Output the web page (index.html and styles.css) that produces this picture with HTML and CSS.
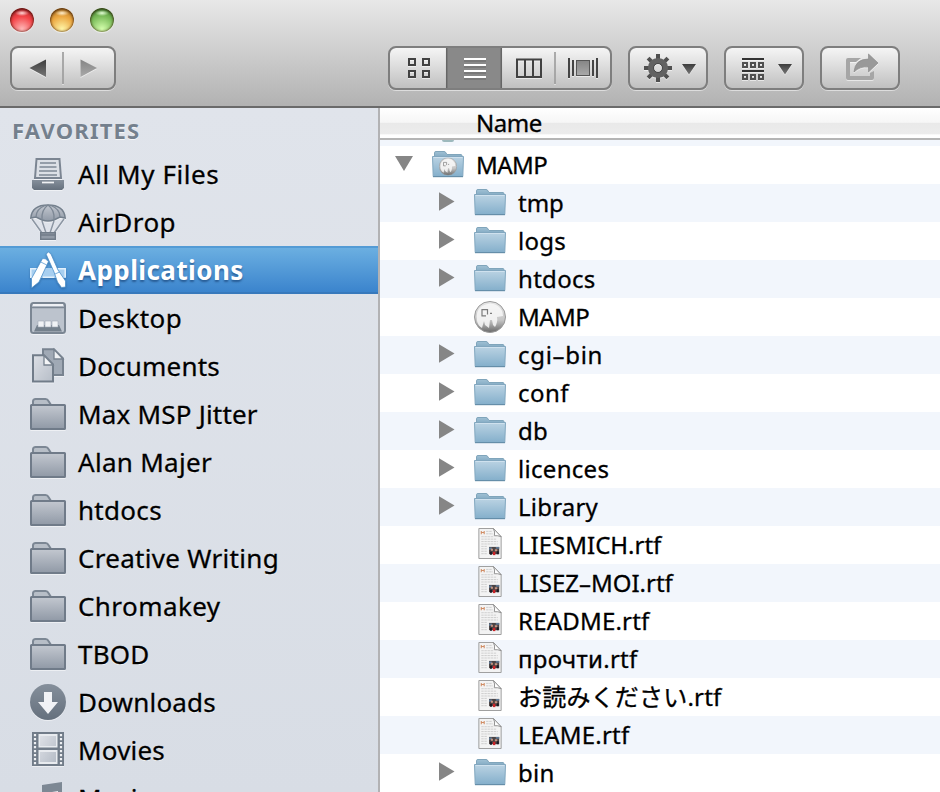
FILE: index.html
```
<!DOCTYPE html>
<html lang="en">
<head>
<meta charset="utf-8">
<title>Applications</title>
<link rel="stylesheet" href="styles.css">
</head>
<body>
<svg class="defs" width="0" height="0" aria-hidden="true">
  <defs>
    <linearGradient id="slate" x1="0" y1="0" x2="0" y2="1"><stop offset="0" stop-color="#858f9b"/><stop offset="1" stop-color="#65707d"/></linearGradient>
    <linearGradient id="pale" x1="0" y1="0" x2="0" y2="1"><stop offset="0" stop-color="#c3c8d0"/><stop offset="1" stop-color="#9099a6"/></linearGradient>
    <linearGradient id="paper" x1="0" y1="0" x2="1" y2="1"><stop offset="0" stop-color="#dde0e6"/><stop offset="1" stop-color="#b6bdc7"/></linearGradient>
    <linearGradient id="blue" x1="0" y1="0" x2="0" y2="1"><stop offset="0" stop-color="#bbd3e3"/><stop offset="1" stop-color="#84afcb"/></linearGradient>
    <linearGradient id="blueTab" x1="0" y1="0" x2="0" y2="1"><stop offset="0" stop-color="#a0c0d4"/><stop offset="1" stop-color="#7fa8c1"/></linearGradient>
    <linearGradient id="ink" x1="0" y1="0" x2="0" y2="1"><stop offset="0" stop-color="#3c3c3c"/><stop offset="1" stop-color="#777"/></linearGradient>
    <linearGradient id="faint" x1="0" y1="0" x2="0" y2="1"><stop offset="0" stop-color="#858585"/><stop offset="1" stop-color="#a9a9a9"/></linearGradient>
    <linearGradient id="ball" x1="0" y1="0" x2="0" y2="1"><stop offset="0" stop-color="#e6e6e6"/><stop offset=".6" stop-color="#c6c6c6"/><stop offset="1" stop-color="#6a6a6a"/></linearGradient>
    <symbol id="folder" viewBox="0 0 36 36">
      <path d="M3 13V9.500L5 7H15.500Q17.500 7 18.500 9L21 13" fill="#b3bac4" stroke="#788390" stroke-width="2"/>
      <rect x="1" y="13" width="34" height="24.500" rx=".5" fill="url(#pale)" stroke="#707b89" stroke-width="2"/>
    </symbol>
    <symbol id="sidefolder" viewBox="0 0 36 36">
      <path d="M3 9V5Q3.500 3 5.500 3H15.500Q17.500 3 18.500 5L21 9" fill="#b7bec7" stroke="#7c8794" stroke-width="2"/>
      <rect x="1" y="9" width="34" height="24" rx=".5" fill="url(#pale)" stroke="#707b89" stroke-width="2"/>
    </symbol>
    <symbol id="bluefolder" viewBox="0 0 32 38">
      <path d="M2.500 12V6.800Q2.500 5.500 4 5.500H12Q13.500 5.500 14 7L15 8.500H29Q30 8.500 30 10V12Z" fill="url(#blueTab)" stroke="#80a5bb" stroke-width="1"/>
      <path d="M.5 10.500H31.500L30.800 30.500H1.200Z" fill="url(#blue)" stroke="#82a7bf" stroke-width="1"/>
      <path d="M1.500 11.500H30.500" stroke="#cfe1ee"/><path d="M1 30.700H31" stroke="#5f89a4"/>
    </symbol>
    <symbol id="elephant" viewBox="0 0 32 32">
      <circle cx="16" cy="16" r="15.500" fill="url(#ball)" stroke="#999"/>
      <path d="M3 20Q1 10 8 5Q17 0 24 5Q29 9 29 15L23 16Q24 21 21 26L19 24L18 19L16 19L15 27L11 24L10 20L8 27Q4 25 3 20Z" fill="#f8f8f8" opacity=".85"/>
      <path d="M13.500 13.500V8.700H8V14.800H12M16 12.300H18" fill="none" stroke="#7b7b7b" stroke-width="1.200"/>
    </symbol>
    <symbol id="rtf" viewBox="0 0 24 32">
      <path d="M.5 .5H15.500L23.500 9V31.500H.5Z" fill="#f3f3f3" stroke="#9c9c9c"/>
      <path d="M3 3V6.500M6 3V6.500M3 4.700H6" stroke="#d08d65" stroke-width="1.100"/>
      <path d="M8 3.500H14M8 6H15M3 9H16M3 11.500H19M3 14H20M3 16.500H20M3 19H9M3 21.500H9M3 24H9M3 26.500H9" stroke="#cdcdcd" stroke-dasharray="2.500 .7"/>
      <rect x="11" y="19.500" width="10.500" height="7.500" fill="#4b4343"/>
      <path d="M11 20h3v2.500h-3zM18 19.500h3.500v2H18z" fill="#5f7893"/><path d="M13 21.500h2v2h-2zM17 22h2.500v2H17z" fill="#c79582"/><path d="M15 24.500h2.500V28H15z" fill="#cb2327"/><path d="M12 24.500h2v3h-2zM19 24h2v3h-2z" fill="#191b25"/>
      <path d="M15.500 .5Q17.500 4 16.500 8Q20 7.500 23.500 9Z" fill="#fff" stroke="#8f8f8f"/>
    </symbol>
    <symbol id="closed" viewBox="0 0 16 38"><path d="M0 8.300L15.500 17.500L0 26.700Z" fill="#868686"/></symbol>
  </defs>
</svg>

<div class="window">
  <header class="toolbar">
    <div class="lights"><span class="light red"></span><span class="light amber"></span><span class="light green"></span></div>
    <div class="controls">
      <div class="button nav">
        <svg width="102" height="40" viewBox="12 48 102 40">
          <path d="M29.500 68L46 59.500V77Z" fill="url(#ink)"/>
          <path d="M97 68L80.500 59.500V77Z" fill="url(#faint)"/>
          <path d="M63 52V84" stroke="#909090" stroke-width="1.500"/>
        </svg>
      </div>
      <div class="button views">
        <svg width="220" height="40" viewBox="390 48 220 40">
          <rect x="446" y="47" width="56" height="42" class="pressed"/>
          <path d="M446.700 47V89M501.300 47V89" stroke="#666" stroke-width="1.500"/>
          <g fill="none" stroke="#414141" stroke-width="2"><path d="M409 59h6v6h-6zM423 59h6v6h-6zM409 71h6v6h-6zM423 71h6v6h-6z"/><path d="M517 59.500h24v17.500h-24zM525 59v18M533 59v18"/></g>
          <path d="M464 61H486M464 67H486M464 73H486M464 79H486" stroke="#555" stroke-width="1" opacity=".6"/>
          <path d="M464 59H486M464 65H486M464 71H486M464 77H486" stroke="#fff" stroke-width="2"/>
          <path d="M555 52V84" stroke="#929292" stroke-width="1.500"/>
          <path d="M569 58V78M573 60V76M593 60V76M597 58V78" stroke="#444" stroke-width="2"/>
          <rect x="576.500" y="60.500" width="13" height="15" fill="url(#faint)" stroke="#555"/>
        </svg>
      </div>
      <div class="button">
        <svg width="76" height="40" viewBox="630 48 76 40">
          <g transform="translate(658 68)">
            <g fill="#505050"><rect id="tooth" x="-2" y="-14" width="4" height="7"/><use href="#tooth" transform="rotate(45)"/><use href="#tooth" transform="rotate(90)"/><use href="#tooth" transform="rotate(135)"/><use href="#tooth" transform="rotate(180)"/><use href="#tooth" transform="rotate(225)"/><use href="#tooth" transform="rotate(270)"/><use href="#tooth" transform="rotate(315)"/></g>
            <circle r="7.200" fill="none" stroke="#626262" stroke-width="5.800"/><circle r="4.500" fill="none" stroke="#454545"/>
          </g>
          <path d="M682 64H696L689 74.500Z" fill="url(#ink)"/>
        </svg>
      </div>
      <div class="button">
        <svg width="76" height="40" viewBox="726 48 76 40">
          <path d="M742 59H764M742 71H764" stroke="#333" stroke-width="2"/>
          <path d="M743 63h4v4h-4zM751 63h4v4h-4zM759 63h4v4h-4zM743 75h4v4h-4zM751 75h4v4h-4zM759 75h4v4h-4z" fill="none" stroke="#505050" stroke-width="2"/>
          <path d="M778 64H792L785 74.500Z" fill="url(#ink)"/>
        </svg>
      </div>
      <div class="button">
        <svg width="76" height="40" viewBox="822 48 76 40">
          <path d="M861 58H848Q846 58 846 60V78Q846 80 848 80H872Q874 80 874 78V71L870 73V76H850V62H856Z" fill="#a6a6a6"/>
          <path d="M854 72Q855 59 868.500 59V54L878 63L868.500 72V67Q860 66 854 72Z" fill="#999" stroke="#8b8b8b" stroke-width=".7"/>
        </svg>
      </div>
    </div>
  </header>

  <main class="body">
    <nav class="sidebar">
      <h2>FAVORITES</h2>
      <ul>
        <li class="ls5"><svg viewBox="0 0 36 36"><path d="M6.500 3H29.500L31 22H5Z" fill="#dce0e6" stroke="#7b8592" stroke-width="2"/><path d="M10 7H26M9.500 11H26.500M9 15H27M9 19H27" stroke="#7e8895" stroke-width="1.700"/><path d="M2 24H34V32L32 34H4L2 32Z" fill="url(#slate)"/><path d="M12 26.500H24" stroke="#eff1f4" stroke-width="1.700"/></svg><span>All My Files</span></li>
        <li class="ls4"><svg viewBox="0 0 36 36"><path d="M2 15L12 29M34 15L24 29M12 17L16 29M24 17L20 29" stroke="#8c96a3" stroke-width="1.500"/><path d="M.8 14Q2 1 18 1T35.200 14L30 13L24 16Q18 18 12 16L6 13Z" fill="url(#pale)" stroke="#74808d" stroke-width="1.500"/><path d="M12 16Q11 6 18 1Q25 6 24 16M6 13Q6 5 15 1.500M30 13Q30 5 21 1.500" fill="none" stroke="#7c8794" stroke-width="1.300"/><path d="M10.700 28.700h14.600v6.600H10.700zM10 31h16" fill="#929ba7" stroke="#717c89" stroke-width="1.400"/></svg><span>AirDrop</span></li>
        <li class="selected ls4"><svg viewBox="0 0 36 36"><path d="M0 16H36V26H0Z" fill="#a8cff0"/><path d="M.8 25.200V16.800H8M28 16.800H35.200V25.200M0 25.200H8M13 25.200H24" fill="none" stroke="#e3f1fc" stroke-width="1.500"/><g stroke="#4b8fca" stroke-width=".8" fill="#fff"><path d="M12.500 6.500Q15 5.500 18.500 9.500L9 30L1.500 36V26.500Z"/><path d="M16 2L18.500 0L21 2L28 18L35.500 29V35L31.500 35.500L27.500 30L24 20Z"/></g><path d="M10.800 10L16.800 13M25 22L29.500 20" stroke="#5a9bd3" stroke-width=".8"/></svg><span>Applications</span></li>
        <li class="ls4"><svg viewBox="0 0 36 36"><rect x="1" y="3" width="34" height="30" rx="2.500" fill="#bcc3cd" stroke="#7b8693" stroke-width="2"/><path d="M3 5H33" stroke="#eef0f4" stroke-width="2"/><path d="M2 7.500H34" stroke="#7c8794" stroke-width="1.500"/><path d="M7 25H29L32 31.500H4Z" fill="#74808c"/><path d="M8 21h6v6H8zM15 21h6v6h-6zM22 21h6v6h-6z" fill="#f0f2f5" stroke="#a2aab5" stroke-width=".6"/></svg><span>Desktop</span></li>
        <li class="ls2"><svg viewBox="0 0 36 36"><path d="M13 1.200H24L33 10.500V27H13Z" fill="#a0a9b5" stroke="#788390" stroke-width="2"/><path d="M24 1.500V11H33Z" fill="#eef0f3" stroke="#788390" stroke-width="1.300"/><path d="M3 7.200H14L23 16.500V33.500H3Z" fill="url(#paper)" stroke="#717c89" stroke-width="2"/><path d="M14 7.500V17H23Z" fill="#f4f5f7" stroke="#788390" stroke-width="1.300"/></svg><span>Documents</span></li>
        <li class="ls2"><svg><use href="#sidefolder"/></svg><span>Max MSP Jitter</span></li>
        <li class="ls3"><svg><use href="#sidefolder"/></svg><span>Alan Majer</span></li>
        <li class="ls3"><svg><use href="#sidefolder"/></svg><span>htdocs</span></li>
        <li class="ls3"><svg><use href="#sidefolder"/></svg><span>Creative Writing</span></li>
        <li class="ls4"><svg><use href="#sidefolder"/></svg><span>Chromakey</span></li>
        <li class="ls2"><svg><use href="#sidefolder"/></svg><span>TBOD</span></li>
        <li class="ls2"><svg viewBox="0 0 36 36"><circle cx="18" cy="18" r="18" fill="url(#slate)"/><path d="M14 8H22V18H28L18 30L8 18H14Z" fill="#f1f2f5"/></svg><span>Downloads</span></li>
        <li class="ls2"><svg viewBox="0 0 36 36"><path d="M2 0H34V34H2Z" fill="#717c89"/><path d="M8.500 2H27.500V15.500H8.500ZM8.500 18H27.500V32H8.500Z" fill="#e8ebef"/><path d="M10 4H26V14H10ZM10 20H26V30H10Z" fill="url(#paper)"/><path d="M5 2V33M31 2V33" stroke="#eef0f3" stroke-width="2.200" stroke-dasharray="2.200 1.800"/></svg><span>Movies</span></li>
        <li class="ls2"><svg viewBox="0 0 36 36"><path d="M12 5L32 2V29H28V11L16 13V33H12Z" fill="#7d8894"/></svg><span>Music</span></li>
      </ul>
    </nav>
    <section class="list">
      <div class="column-head">Name</div>
      <div class="sliver"><i></i></div>
      <div class="row root tight"><svg class="arrow" viewBox="0 0 18 38"><path d="M0 10H18L9 25Z" fill="#868686"/></svg><svg class="icon" viewBox="0 0 32 38"><use href="#bluefolder" width="32" height="38"/><use href="#elephant" x="7" y="11.500" width="18" height="18"/></svg><span>MAMP</span></div>
      <div class="row"><svg class="arrow"><use href="#closed"/></svg><svg class="icon"><use href="#bluefolder"/></svg><span>tmp</span></div>
      <div class="row ls3"><svg class="arrow"><use href="#closed"/></svg><svg class="icon"><use href="#bluefolder"/></svg><span>logs</span></div>
      <div class="row ls3"><svg class="arrow"><use href="#closed"/></svg><svg class="icon"><use href="#bluefolder"/></svg><span>htdocs</span></div>
      <div class="row tight"><svg class="arrow"></svg><svg class="icon"><use href="#elephant" y="3" width="32" height="32"/></svg><span>MAMP</span></div>
      <div class="row ls7"><svg class="arrow"><use href="#closed"/></svg><svg class="icon"><use href="#bluefolder"/></svg><span>cgi–bin</span></div>
      <div class="row ls4"><svg class="arrow"><use href="#closed"/></svg><svg class="icon"><use href="#bluefolder"/></svg><span>conf</span></div>
      <div class="row ls3"><svg class="arrow"><use href="#closed"/></svg><svg class="icon"><use href="#bluefolder"/></svg><span>db</span></div>
      <div class="row ls3"><svg class="arrow"><use href="#closed"/></svg><svg class="icon"><use href="#bluefolder"/></svg><span>licences</span></div>
      <div class="row ls2"><svg class="arrow"><use href="#closed"/></svg><svg class="icon"><use href="#bluefolder"/></svg><span>Library</span></div>
      <div class="row"><svg class="arrow"></svg><svg class="icon"><use href="#rtf" x="4" y="2" width="24" height="31"/></svg><span>LIESMICH.rtf</span></div>
      <div class="row"><svg class="arrow"></svg><svg class="icon"><use href="#rtf" x="4" y="2" width="24" height="31"/></svg><span>LISEZ–MOI.rtf</span></div>
      <div class="row ls2"><svg class="arrow"></svg><svg class="icon"><use href="#rtf" x="4" y="2" width="24" height="31"/></svg><span>README.rtf</span></div>
      <div class="row ls3"><svg class="arrow"></svg><svg class="icon"><use href="#rtf" x="4" y="2" width="24" height="31"/></svg><span>прочти.rtf</span></div>
      <div class="row ls2"><svg class="arrow"></svg><svg class="icon"><use href="#rtf" x="4" y="2" width="24" height="31"/></svg><span lang="ja">お読みください.rtf</span></div>
      <div class="row ls2"><svg class="arrow"></svg><svg class="icon"><use href="#rtf" x="4" y="2" width="24" height="31"/></svg><span>LEAME.rtf</span></div>
      <div class="row ls3"><svg class="arrow"><use href="#closed"/></svg><svg class="icon"><use href="#bluefolder"/></svg><span>bin</span></div>
    </section>
  </main>
</div>
</body>
</html>
```
FILE: styles.css
```
* { box-sizing: border-box; }
body { margin: 0; overflow: hidden; font-family: "Noto Sans", "Noto Sans CJK JP", sans-serif; color: #000; }
.defs { position: absolute; }
svg { display: block; flex: none; }
.window { width: 940px; height: 792px; overflow: hidden; display: flex; flex-direction: column; }

.ls2 { letter-spacing: .2px; }
.ls3 { letter-spacing: .3px; }
.ls4 { letter-spacing: .43px; }
.ls5 { letter-spacing: .57px; }
.ls7 { letter-spacing: .7px; }
.tight { letter-spacing: -.5px; }

.toolbar { flex: none; height: 108px; padding: 8px 10px 0; border-bottom: 2px solid #6a6a6a; background: linear-gradient(#e8e8e8, #b2b2b2); }
.lights { display: flex; gap: 16px; height: 38px; }
.light { width: 24px; height: 24px; border-radius: 50%; box-shadow: inset 0 0 2px 1px rgba(60, 20, 0, .5), inset 0 2px 3px rgba(0, 0, 0, .35), 0 1px 1px rgba(255, 255, 255, .6); }
.red { background: radial-gradient(ellipse 7px 3px at 50% 21%, #ffd9d9, transparent), radial-gradient(circle at 50% 88%, #ffb9b9, #f34549 52%, #a81c22); }
.amber { background: radial-gradient(ellipse 7px 3px at 50% 21%, #fff0d0, transparent), radial-gradient(circle at 50% 88%, #fff6a8, #eca842 52%, #a5671b); }
.green { background: radial-gradient(ellipse 7px 3px at 50% 21%, #e6ffd8, transparent), radial-gradient(circle at 50% 88%, #d5ffad, #7dbe5c 52%, #397a26); }
.controls { display: flex; gap: 16px; }
.button { height: 44px; border: 2px solid #7e7e7e; border-radius: 8px; overflow: hidden; background: linear-gradient(#f5f5f5, #c0c0c0) padding-box; box-shadow: 0 1px 0 rgba(255, 255, 255, .5); }
.button svg { filter: drop-shadow(0 1px 0 rgba(255, 255, 255, .55)); }
.nav { margin-right: 256px; }
.pressed { fill: #898989; }

.body { flex: 1; min-height: 0; display: flex; }
.sidebar { width: 380px; flex: none; overflow: hidden; border-right: 2px solid #b2b2b4; background: linear-gradient(#e0e4eb, #d8dde5); }
.sidebar h2 { margin: 0; padding-left: 12px; height: 42px; line-height: 45px; font-size: 22px; font-weight: 700; color: #74808d; text-shadow: 0 1px 0 #f4f6f8; letter-spacing: 1.2px; }
.sidebar ul { margin: 0; padding: 0; list-style: none; }
.sidebar li { height: 48px; padding-left: 30px; display: flex; gap: 12px; align-items: center; font-size: 26px; line-height: 48px; white-space: nowrap; -webkit-text-stroke: .3px currentColor; }
.sidebar li svg { width: 36px; height: 36px; overflow: visible; filter: drop-shadow(0 1px 0 rgba(255, 255, 255, .5)); }
.sidebar li span { text-shadow: 0 1px 0 rgba(255, 255, 255, .7); }
.sidebar .selected { color: #fff; font-weight: 700; -webkit-text-stroke: 0; border-top: 2px solid #539bd5; border-bottom: 2px solid #3779bc; background: linear-gradient(#6bafe1, #3b84cd); }
.sidebar .selected svg { filter: drop-shadow(0 1px 1px rgba(20, 60, 110, .4)); }
.sidebar .selected span { text-shadow: 0 2px 2px rgba(20, 60, 110, .6); }

.list { flex: 1; min-width: 0; overflow: hidden; font-size: 24px; -webkit-text-stroke: .3px currentColor; }
.column-head { height: 32px; padding-left: 96px; line-height: 29px; letter-spacing: -.5px; border-bottom: 2px solid #b5b5b5; background: linear-gradient(#fff, #f6f6f6 48%, #e9e9e9 50%, #ececec 85%, #fff 90%); }
.sliver { height: 6px; padding-left: 62px; background: #f2f6fc; }
.sliver i { display: block; width: 12px; height: 2px; border-radius: 0 0 6px 6px; background: #9db9bd; }
.row { height: 38px; padding-left: 59px; display: flex; line-height: 38px; white-space: nowrap; }
.row:nth-child(even) { background: #f2f6fc; }
.row.root { padding-left: 15px; }
.row .arrow { width: 16px; height: 38px; margin-right: 19px; }
.row.root .arrow { width: 18px; }
.row .icon { width: 32px; height: 38px; margin-right: 12px; }
```
